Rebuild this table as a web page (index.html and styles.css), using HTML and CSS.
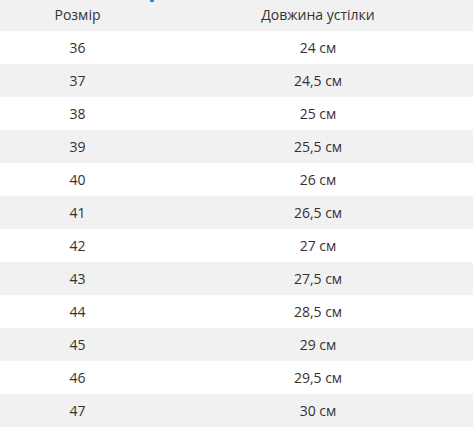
FILE: index.html
```html
<!DOCTYPE html>
<html lang="uk">
<head>
<meta charset="utf-8">
<link rel="stylesheet" href="styles.css">
</head>
<body>
<div class="wrap">
  <span class="mark"></span>
  <div class="table">
    <div class="row head"><div class="c1">Розмір</div><div class="c2">Довжина устілки</div></div>
    <div class="row"><div class="c1">36</div><div class="c2">24 см</div></div>
    <div class="row alt"><div class="c1">37</div><div class="c2">24,5 см</div></div>
    <div class="row"><div class="c1">38</div><div class="c2">25 см</div></div>
    <div class="row alt"><div class="c1">39</div><div class="c2">25,5 см</div></div>
    <div class="row"><div class="c1">40</div><div class="c2">26 см</div></div>
    <div class="row alt"><div class="c1">41</div><div class="c2">26,5 см</div></div>
    <div class="row"><div class="c1">42</div><div class="c2">27 см</div></div>
    <div class="row alt"><div class="c1">43</div><div class="c2">27,5 см</div></div>
    <div class="row"><div class="c1">44</div><div class="c2">28,5 см</div></div>
    <div class="row alt"><div class="c1">45</div><div class="c2">29 см</div></div>
    <div class="row"><div class="c1">46</div><div class="c2">29,5 см</div></div>
    <div class="row alt"><div class="c1">47</div><div class="c2">30 см</div></div>
  </div>
</div>
</body>
</html>
```
FILE: styles.css
```css
html, body {
  margin: 0;
  padding: 0;
  background: #ffffff;
}
.wrap {
  position: relative;
  width: 473px;
  height: 430px;
  overflow: hidden;
  font-family: "Open Sans", "Liberation Sans", sans-serif;
  font-size: 14px;
  color: #333333;
}
.mark {
  position: absolute;
  left: 150px;
  top: 0;
  width: 4px;
  height: 2px;
  background: #2a8fd8;
  z-index: 2;
}
.table {
  margin-top: -2px;
  display: flex;
  flex-direction: column;
}
.row {
  display: grid;
  grid-template-columns: 155px 1fr;
  height: 33px;
  align-items: center;
  background: #ffffff;
}
.row.head,
.row.alt {
  background: #f1f1f1;
}
.c1, .c2 {
  text-align: center;
  line-height: 33px;
}
.c2 {
  padding-left: 8px;
}
```
